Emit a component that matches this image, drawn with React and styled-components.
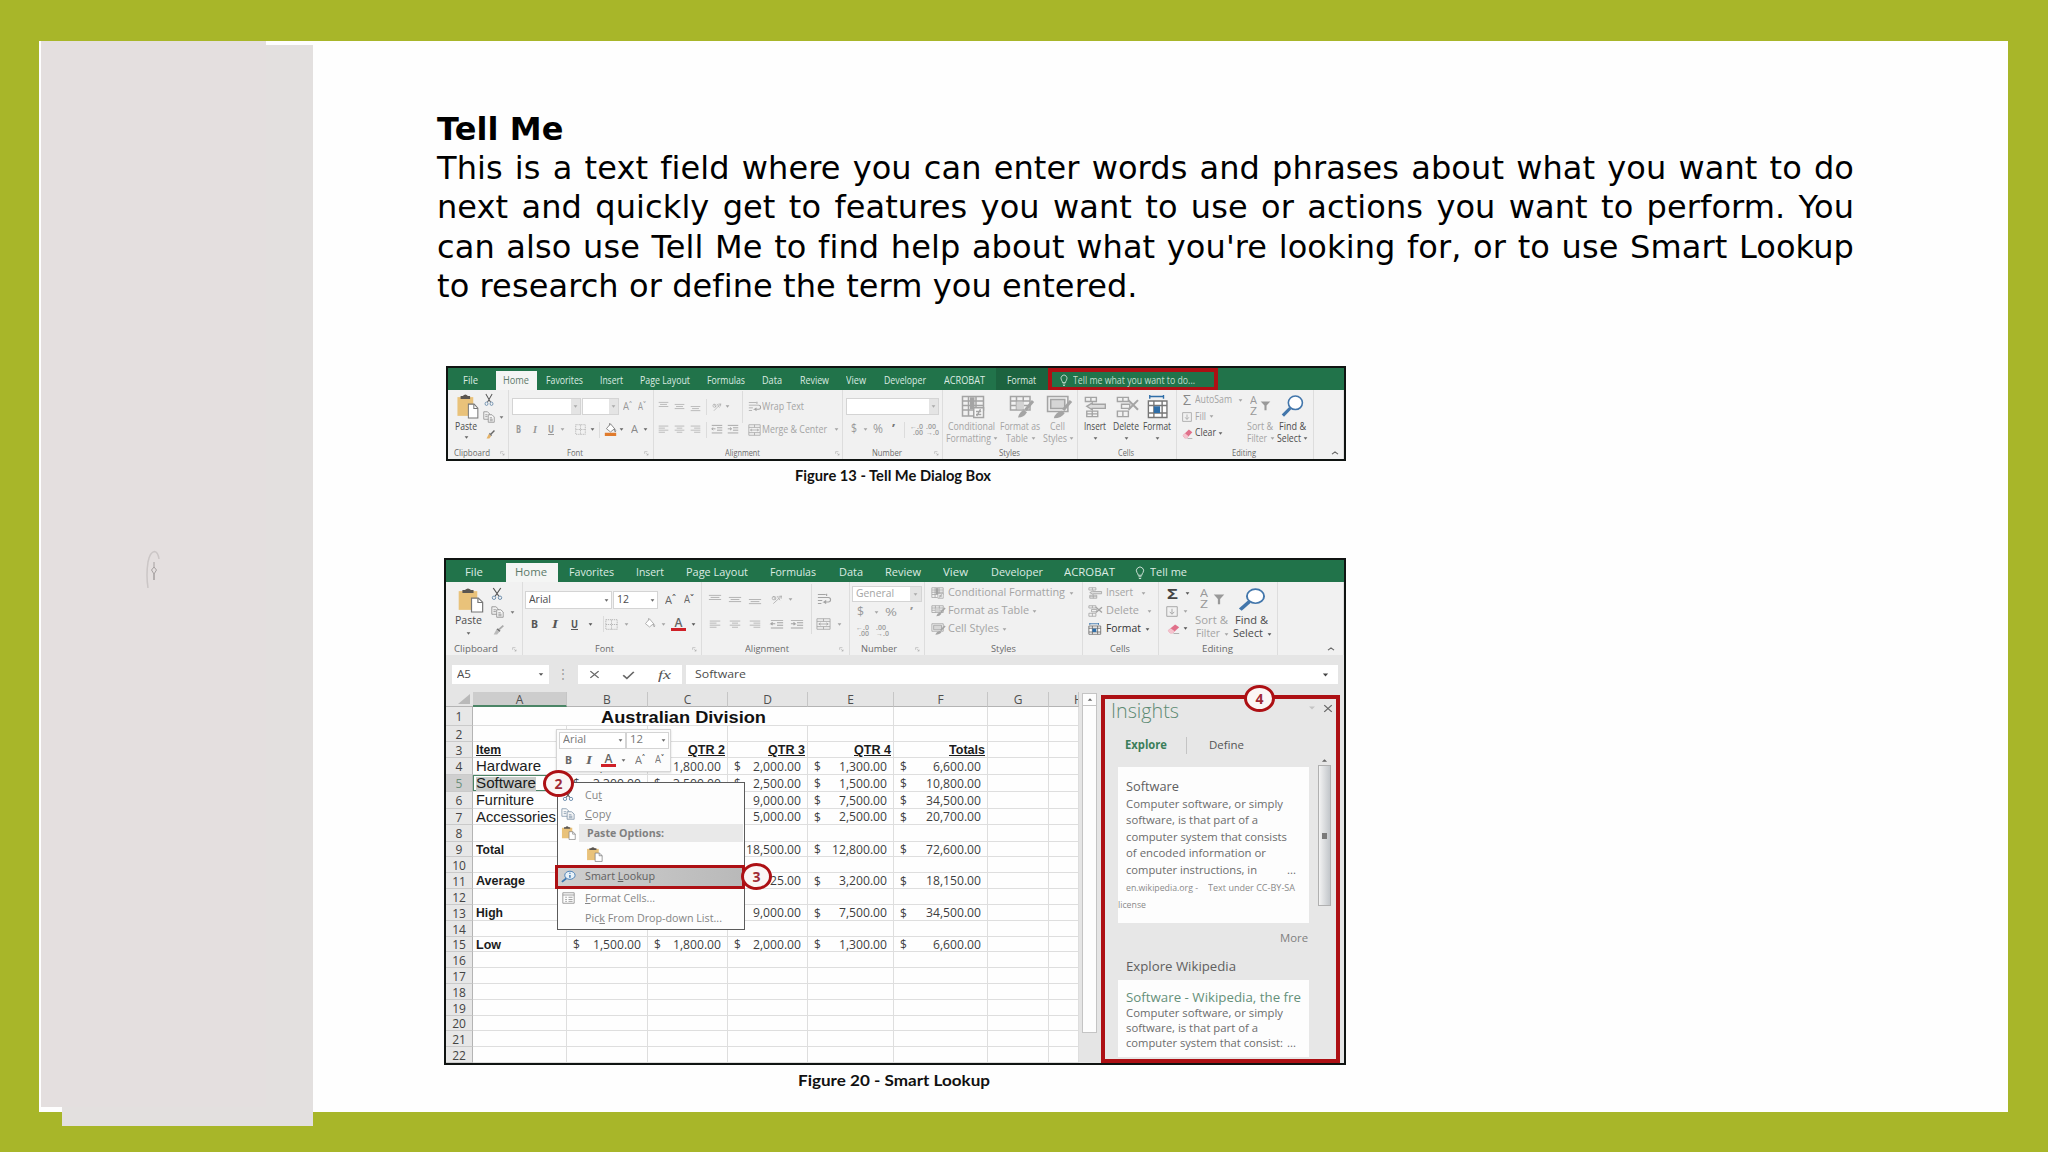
import * as React from "react";
import styled, { createGlobalStyle } from "styled-components";

const GREEN = "#21734a";
const RED = "#ad1014";
const OFF = "#a4a4a4";
const ON = "#4c4c4c";

const GlobalStyle = createGlobalStyle`
	* { box-sizing: border-box; }

	body {
		margin: 0;
		background: #a8b629;
		font-family: "Open Sans", "Noto Sans", sans-serif;
	}
`;

/* ---------- slide ---------- */

const SlideStyle = styled.div`
	width: 2048px;
	height: 1152px;
	padding: 41px 40px 40px 39px;
	background: #a8b629;
	overflow: hidden;
`;

const SheetStyle = styled.div`
	position: relative;
	display: flex;
	height: 1071px;
	background: #fefefe;
`;

const RailStyle = styled.div`
	flex: none;
	display: grid;
	width: 274px;
	height: 1085px;
`;

const RailPanelStyle = styled.div`
	grid-area: 1 / 1;
	margin: ${({ $margin }) => $margin};
	background: ${({ $color }) => $color};
`;

const RailMarkStyle = styled.svg`
	grid-area: 1 / 1;
	width: 20px;
	height: 44px;
	margin: 508px 0 0 103px;
`;

const ArticleStyle = styled.main`
	display: grid;
	grid-template-rows: 325px 192px 1fr;
	margin-left: 124px;
`;

const CopyStyle = styled.section`
	width: 1417px;
	padding-top: 69px;
	font-family: "DejaVu Sans", sans-serif;
	font-size: 32px;
	letter-spacing: 0.09px;
	line-height: 39.2px;
	font-variant-ligatures: common-ligatures;
	color: #000;
`;

const HeadingStyle = styled.h1`
	margin: 0;
	font-size: inherit;
	line-height: inherit;
`;

const LineStyle = styled.div`
	white-space: nowrap;
	text-align-last: ${({ $last }) => ($last ? "left" : "justify")};
`;

const FigureStyle = styled.figure`
	width: ${({ $w }) => $w}px;
	margin: 0 0 0 ${({ $left }) => $left}px;
`;

const FrameStyle = styled.div`
	position: relative;
	height: ${({ $h }) => $h}px;
	border: 2px solid #101412;
	background: #f1f1f1;
`;

const CaptionStyle = styled.figcaption`
	display: flex;
	height: ${({ $h }) => $h}px;
	padding-left: ${({ $left }) => $left}px;
	align-items: center;
	font-family: Lato, sans-serif;
`;

/* ---------- text squeezed to a width ---------- */

const FitBoxStyle = styled.span`
	display: block;
	flex: none;
	width: ${({ $w }) => $w}px;
	font-size: ${({ $size }) => $size}px;
	font-weight: ${({ $weight }) => $weight};
	font-family: ${({ $font }) => $font || "inherit"};
	font-style: ${({ $italic }) => ($italic ? "italic" : "normal")};
	text-decoration: ${({ $line }) => ($line ? "underline" : "none")};
	line-height: 1.36;
	white-space: nowrap;
	color: ${({ $color }) => $color};
`;

const FitTextStyle = styled.span`
	display: inline-block;
	transform-origin: 0 50%;
	text-decoration: inherit;
`;

const Fit = ({ w, size = 10, color = ON, weight = 400, font, italic, line, children }) => {
	const ref = React.useRef(null);
	const [scale, setScale] = React.useState(1);

	React.useLayoutEffect(() => {
		setScale(w / parseFloat(getComputedStyle(ref.current).width));
	}, [w, children]);

	return (
		<FitBoxStyle $w={w} $size={size} $color={color} $weight={weight} $font={font} $italic={italic} $line={line}>
			<FitTextStyle ref={ref} style={{ transform: `scaleX(${scale})` }}>
				{children}
			</FitTextStyle>
		</FitBoxStyle>
	);
};

/* ---------- icons, all on a 16 x 16 board ---------- */

const lines = (list) =>
	list.map(([y, x1, x2]) => <path key={y} d={`M${x1} ${y}H${x2}`} />);

const ICONS = {
	arrow: <path d="M2 4h12l-6 8z" fill="currentColor" stroke="none" />,
	paste: (
		<>
			<path d="M1 2h11v12H1z" fill="#e9c27a" stroke="none" />
			<path d="M3.2 3.2V1.3h1.5q1.8-2 3.6 0h1.5v1.9z" fill="#5b5650" stroke="none" />
			<path d="M8.6 6.5h4l2.6 2.6v6.3H8.6z" fill="#fff" stroke="#777" strokeWidth=".7" />
			<path d="M12.4 6.5v2.8h2.8" stroke="#777" strokeWidth=".7" />
		</>
	),
	cut: (
		<>
			<path d="M3 0l7.5 11M13 0L5.500 11" stroke="#555" strokeWidth="1.6" />
			<circle cx="4" cy="13" r="2.300" stroke="#6d8fae" strokeWidth="1.3" />
			<circle cx="12" cy="13" r="2.300" stroke="#6d8fae" strokeWidth="1.3" />
		</>
	),
	copy: (
		<>
			<path d="M1 1h5l3 3v7H1zM3 5h3M3 7.500h3" />
			<path d="M7 5h5l3 3v7H7z" fill="#f6f6f6" />
			<path d="M9 9h3M9 11h4M9 13h4" />
		</>
	),
	brush: (
		<>
			<path d="M15 1l-6 6" stroke="currentColor" strokeWidth="2.500" />
			<path d="M7 5l4 4-2 2-4-4z" fill="#777" stroke="none" />
			<path d="M5 7l4 4-3 4H1z" fill="var(--tip, #e5b266)" stroke="none" />
		</>
	),
	borders: <path d="M1 1h14v14H1zM1 8h14M8 1v14" strokeDasharray="1.500 1" />,
	fill: (
		<>
			<path d="M3 7l5-6 5 6-5 4z" fill="#fff" stroke="currentColor" />
			<path d="M13 7q2.500 3 1 4-2-.5-1-4M7 3V0" stroke="currentColor" />
			<path d="M1 12h14v4H1z" fill="var(--ink, none)" stroke="none" />
		</>
	),
	top: lines([[2, 1, 15], [5, 3, 13], [8, 1, 15]]),
	middle: lines([[5, 1, 15], [8, 3, 13], [11, 1, 15]]),
	bottom: lines([[8, 1, 15], [11, 3, 13], [14, 1, 15]]),
	left: lines([[3, 1, 15], [6, 1, 10], [9, 1, 15], [12, 1, 10]]),
	center: lines([[3, 1, 15], [6, 4, 12], [9, 1, 15], [12, 4, 12]]),
	right: lines([[3, 1, 15], [6, 6, 15], [9, 1, 15], [12, 6, 15]]),
	orient: (
		<>
			<path d="M3 14L14 3M14 3l-4 .5M14 3l-.5 4" />
			<circle cx="4" cy="6" r="2.500" />
			<path d="M6 8L3 3M8 3l4 6" />
		</>
	),
	outdent: <path d="M1 2h14M8 5.500h7M8 9h7M1 13h14M6 7H1l2-2M1 7l2 2" strokeWidth="1.300" />,
	indent: <path d="M1 2h14M8 5.500h7M8 9h7M1 13h14M1 7h5L4 5M6 7L4 9" strokeWidth="1.300" />,
	wrap: <path d="M1 2h9M1 6h12q2.500 0 2.500 3T13 12H8l2.500-2M8 12l2.500 2M1 10h5M1 14h4M11 1v3" strokeWidth="1.300" />,
	merge: <path d="M1 1h14v14H1zM1 4.500h14M1 11.500h14M8 1v3.500M8 11.500V15M3 8h10M5 6.500L3 8l2 1.500M11 6.500L13 8l-2 1.500" />,
	cond: (
		<>
			<path d="M1 1h14v9H1zM1 4h14M1 7h14M5 1v13M10 1v9M1 10v4h7" />
			<path d="M6 1.500h3v8H6z" fill="currentColor" stroke="none" />
			<path d="M8.500 8.500H15V15H8.500z" fill="#f8f8f8" />
			<path d="M10 11h3.500M10 13h3.500M13 9.500l-2.500 4.500" />
		</>
	),
	table: (
		<>
			<path d="M1 1h13v9H1zM1 4h13M1 7h13M5 1v9M9.500 1v9" />
			<path d="M5 4.500h5v5H5z" fill="#d2d2d2" stroke="none" />
			<path d="M16 4l-5 6" strokeWidth="2" />
			<path d="M6 15q1-4 4-5l2 1.500q-2 3.500-6 3.500z" fill="currentColor" stroke="none" />
		</>
	),
	cellStyle: (
		<>
			<path d="M1 1h13v10H1z" />
			<path d="M3 3h9v6H3z" fill="#d6d6d6" />
			<path d="M16 4l-5 6" strokeWidth="2" />
			<path d="M5 15.500q1-4 5-5l2 1.500q-2 3.500-7 3.500z" fill="currentColor" stroke="none" />
		</>
	),
	insert: (
		<>
			<path d="M1 1h8v3H1zM5 1v3M2 11h8v4H2zM6 11v4M2 13h8" />
			<path d="M6 6h9.500v3H6L6 10 2 7.500 6 5z" fill="#ddd" />
		</>
	),
	remove: (
		<>
			<path d="M1 1h8v3H1zM5 1v3M1 11h8v4H1zM5 11v4M4 6h6v3H4z" />
			<path d="M9 3l7 7M16 3l-7 7" strokeWidth="1.500" />
		</>
	),
	format: (
		<>
			<path d="M1 4h13.500v11H1zM1 7h13.500M1 12h13.500M5 4v11M11 4v11" fill="#fff" />
			<path d="M5 7.500h4.500V12H5z" fill="var(--blue, #2f6ea8)" stroke="none" />
			<path d="M2 1h10M2 0v2.500M12 0v2.500" stroke="var(--blue, #2f6ea8)" />
		</>
	),
	down: <path d="M1 1h14v14H1zM8 4v7M5 8.500L8 12l3-3.500" strokeWidth="1.300" />,
	eraser: (
		<>
			<path d="M1 11L10 2l5 4-8 9H4z" fill="#e0708a" stroke="none" />
			<path d="M1 11l3.500-3.500L9.500 12 7 15H4z" fill="#f4c3cd" stroke="none" />
			<path d="M8 15.300h7" stroke="#999" />
		</>
	),
	funnel: <path d="M1 2h14L9.500 8v7h-3V8z" fill="currentColor" stroke="none" />,
	find: (
		<>
			<path d="M6.500 9.500L1.300 15" stroke="#4276ab" strokeWidth="2.200" />
			<circle cx="10" cy="5.700" r="4.900" fill="#fff" stroke="#4276ab" strokeWidth="1.100" />
		</>
	),
	launch: <path d="M2 9V2h9M7 7l6 6M13 8v5H8" strokeWidth="1.500" />,
	up: <path d="M2 11l6-6 6 6" strokeWidth="2.200" />,
	bulb: <path d="M5.500 11q0-2-1.500-3.500a4.800 4.800 0 1 1 8 0Q10.500 9 10.500 11zM6 13h4M6.500 15.300h3" strokeWidth="1.200" />,
	close: <path d="M2 2l12 12M14 2L2 14" strokeWidth="2" />,
	check: <path d="M1.500 8.500l4.500 5L14.500 3" strokeWidth="2.200" />,
	smart: (
		<>
			<path d="M6 10l-5 4.500" stroke="#3a76b0" strokeWidth="2" />
			<ellipse cx="9.500" cy="6.500" rx="5.500" ry="5" fill="#e8f1f8" stroke="#3a76b0" />
			<path d="M9.500 6v3.500M9.500 3.500v1" stroke="#3a76b0" strokeWidth="1.500" />
		</>
	),
	list: <path d="M1 1h14v14H1zM1 4h14M4 7h2M8 7h5M4 10h2M8 10h5M4 12.500h2M8 12.500h5" />,
};

const IconStyle = styled.svg`
	display: block;
	flex: none;
	width: ${({ $w }) => $w}px;
	height: ${({ $h }) => $h}px;
	color: ${({ $color }) => $color};
	fill: none;
	stroke: currentColor;
	overflow: visible;
	--tip: ${({ $tip }) => $tip || "#e5b266"};
	--ink: ${({ $ink }) => $ink || "none"};
	--blue: ${({ $tip }) => $tip || "#2f6ea8"};
`;

const Icon = ({ name, w, h, color = OFF, tip, ink }) => (
	<IconStyle viewBox="0 0 16 16" preserveAspectRatio="none" $w={w} $h={h || w} $color={color} $tip={tip} $ink={ink}>
		{ICONS[name]}
	</IconStyle>
);

/* ---------- rows measured on the ruler of the page ---------- */

const StripStyle = styled.div`
	display: flex;
	flex: none;
	align-items: center;
	height: ${({ $h }) => $h}px;
	margin-top: ${({ $gap }) => $gap}px;
`;

const SlotStyle = styled.div`
	display: flex;
	flex: none;
	align-self: stretch;
	align-items: center;
	width: ${({ $w }) => $w}px;
	margin-left: ${({ $gap }) => $gap}px;
`;

const Strip = ({ from, h = 12, gap = 0, items }) => {
	let edge = from;

	return (
		<StripStyle $h={h} $gap={gap}>
			{items.map(([x, w, content, text], idx) => {
				const space = x - edge;
				edge = x + w;
				return (
					<SlotStyle key={idx} $gap={space} $w={w}>
						{typeof content === "string" ? (
							<Fit w={w} {...text}>{content}</Fit>
						) : (
							content
						)}
					</SlotStyle>
				);
			})}
		</StripStyle>
	);
};

const StackStyle = styled.div`
	display: flex;
	flex-direction: column;
	align-self: flex-start;
	width: 100%;
`;

const Stack = ({ from, top, rows }) => {
	let edge = top;

	return (
		<StackStyle>
			{rows.map(([center, items, h = 12], idx) => {
				const gap = center - h / 2 - edge;
				edge = center + h / 2;
				return <Strip key={idx} from={from} h={h} gap={gap} items={items} />;
			})}
		</StackStyle>
	);
};

const ic = (x, w, name, h, props) => [x, w, <Icon name={name} w={w} h={h} {...props} />];
const dd = (x, color = OFF) => [x - 2.5, 5, <Icon name="arrow" w={5} h={5} color={color} />];

const RuleStyle = styled.span`
	width: 1px;
	height: ${({ $h }) => $h}px;
	background: #dcdcdc;
`;

const rule = (x, h = 16) => [x, 1, <RuleStyle $h={h} />];

const DecimalStyle = styled.div`
	display: flex;
	flex-direction: column;
	align-items: ${({ $end }) => ($end ? "flex-end" : "flex-start")};
	font-size: 7px;
	font-weight: 600;
	line-height: 6px;
	color: #9c9c9c;
`;

const more = (x, w) => [x, w, <DecimalStyle $end><span>←.0</span><span>.00</span></DecimalStyle>];
const fewer = (x, w) => [x, w, <DecimalStyle><span>.00</span><span>→.0</span></DecimalStyle>];

const ComboStyle = styled.div`
	display: flex;
	width: 100%;
	height: ${({ $h }) => $h}px;
	align-items: center;
	justify-content: space-between;
	padding-left: 3px;
	border: 1px solid #d4d4d4;
	background: #fff;
`;

const ComboButtonStyle = styled.span`
	display: flex;
	width: ${({ $w }) => $w}px;
	height: 100%;
	margin-left: auto;
	align-items: center;
	justify-content: center;
	background: ${({ $off }) => ($off ? "#e4e4e4" : "transparent")};
`;

const Combo = ({ h, text, w, size, off, color, button = 9 }) => (
	<ComboStyle $h={h}>
		{text && <Fit w={w} size={size} color={color}>{text}</Fit>}
		<ComboButtonStyle $w={button} $off={off}>
			<Icon name="arrow" w={5} h={5} color={off ? "#aaa" : "#666"} />
		</ComboButtonStyle>
	</ComboStyle>
);

/* ---------- ribbon ---------- */

const TabBarStyle = styled.nav`
	display: flex;
	height: 22px;
	align-items: flex-end;
	background: ${GREEN};
`;

const TabStyle = styled.div`
	display: flex;
	flex: none;
	width: ${({ $w }) => $w}px;
	height: ${({ $active }) => ($active ? 19 : 22)}px;
	align-items: center;
	padding-left: ${({ $pad }) => $pad}px;
	padding-top: ${({ $active, $drop }) => ($active ? 0 : 3) + $drop}px;
	background: ${({ $active, $dark }) => ($active ? "#f4f5f4" : $dark ? "#1c633f" : "none")};
`;

const TellMeStyle = styled.div`
	display: flex;
	flex: none;
	width: ${({ $w }) => $w}px;
	height: 22px;
	align-items: center;
	gap: 4px;
	padding: ${({ $boxed }) => ($boxed ? "2px 0 0 7px" : "3px 0 0")};
	margin-left: ${({ $gap }) => $gap}px;
	border: ${({ $boxed }) => ($boxed ? `4px solid ${RED}` : "none")};
	border-bottom-width: ${({ $boxed }) => ($boxed ? 3 : 0)}px;
`;

const RibbonBodyStyle = styled.div`
	display: flex;
	height: ${({ $h }) => $h}px;
	background: #f1f1f1;
`;

const GroupStyle = styled.section`
	display: flex;
	flex: none;
	flex-direction: column;
	width: ${({ $w }) => $w}px;
	border-right: 1px solid #dddddd;
`;

const GroupBodyStyle = styled.div`
	height: ${({ $h }) => $h}px;
`;

const Tabs = ({ tabs, size, drop = 0, children }) => (
	<TabBarStyle>
		{tabs.map(({ name, x, w, from, to, active, dark }) => (
			<TabStyle key={name} $w={to - from} $pad={x - from} $active={active} $dark={dark} $drop={drop}>
				<Fit w={w} size={size} color={active ? "#5d7a6a" : "#dcebe2"}>
					{name}
				</Fit>
			</TabStyle>
		))}
		{children}
	</TabBarStyle>
);

const Ribbon = ({ top, h, groups }) => (
	<RibbonBodyStyle $h={h}>
		{groups.map(({ from, to, label, launch, up, rows }) => (
			<GroupStyle key={from} $w={to - from}>
				<GroupBodyStyle $h={h - 12}>
					<Stack from={from} top={top} rows={rows} />
				</GroupBodyStyle>
				<Strip
					from={from}
					h={12}
					items={[
						...(label ? [[label[0], label[1], label[2], { size: 9, color: "#6a6a6a" }]] : []),
						...(launch ? [ic(launch - 2.5, 5, "launch", 5, { color: "#999" })] : []),
						...(up ? [ic(up - 4, 8, "up", 6, { color: "#666" })] : []),
					]}
				/>
			</GroupStyle>
		))}
	</RibbonBodyStyle>
);

const tab = (name, x, w, from, to, extra) => ({ name, x, w, from, to, ...extra });

const RIBBON_TABS = [
	tab("File", 463, 15, 448, 496),
	tab("Home", 503, 26, 496, 537, { active: true }),
	tab("Favorites", 546, 37, 537, 592),
	tab("Insert", 600, 23, 592, 632),
	tab("Page Layout", 640, 50, 632, 698),
	tab("Formulas", 707, 38, 698, 754),
	tab("Data", 762, 20, 754, 791),
	tab("Review", 800, 29, 791, 838),
	tab("View", 846, 20, 838, 875),
	tab("Developer", 884, 42, 875, 935),
	tab("ACROBAT", 944, 41, 935, 996),
	tab("Format", 1007, 29, 996, 1048, { dark: true }),
];

const off = { size: 10, color: OFF };
const on = { size: 10, color: ON };
const letter = (color, extra) => ({ size: 11, color, weight: 700, ...extra });

const RIBBON_GROUPS = [
	{
		from: 448, to: 509, label: [454, 36, "Clipboard"], launch: 502,
		rows: [[418, [
			[448, 32, <Stack from={448} top={390} rows={[
				[405.5, [ic(456, 23, "paste", 25)], 26],
				[425.5, [[455, 22, "Paste", on]]],
				[436, [dd(466, "#666")], 4],
			]} />],
			[480, 28, <Stack from={480} top={390} rows={[
				[399, [ic(484, 10, "cut", 12)]],
				[416, [ic(483, 12, "copy", 12, { color: "#888" }), dd(501, "#777")]],
				[433, [ic(486, 9, "brush", 9, { color: "#666" })]],
			]} />],
		], 56]],
	},
	{
		from: 509, to: 654, label: [567, 16, "Font"], launch: 646,
		rows: [
			[405.5, [
				[512, 69, <Combo h={17} off />],
				[582, 37, <Combo h={17} off />],
				[623, 6, "A", letter("#999", { weight: 400 })], [629, 3, "ˆ", off],
				[638, 5, "A", letter("#999", { weight: 400, size: 10 })], [643, 3, "ˇ", off],
			], 18],
			[428.5, [
				[516, 5, "B", letter("#999")],
				[533, 4, "I", letter("#999", { italic: true, font: "Liberation Serif" })],
				[548, 6, "U", letter("#999", { line: true })], dd(562),
				ic(575, 11, "borders", 11), dd(592, "#666"), rule(599),
				ic(604, 13, "fill", 13, { color: "#777", ink: "#e07b2c" }), dd(621, "#666"),
				[631, 7, "A", letter("#888", { weight: 400 })], dd(645, "#666"),
			], 14],
		],
	},
	{
		from: 654, to: 843, label: [725, 35, "Alignment"], launch: 837,
		rows: [
			[405.5, [
				ic(658, 11, "top", 11), ic(674, 11, "middle", 11), ic(690, 11, "bottom", 11), rule(706),
				ic(712, 10, "orient", 10), dd(727), rule(742, 32),
				ic(748, 13, "wrap", 11), [762, 42, "Wrap Text", off],
			], 14],
			[428.5, [
				ic(658, 11, "left", 11), ic(674, 11, "center", 11), ic(690, 11, "right", 11), rule(706),
				ic(711, 12, "outdent", 11), ic(727, 12, "indent", 11),
				ic(748, 13, "merge", 12), [762, 65, "Merge & Center", off], dd(836),
			], 14],
		],
	},
	{
		from: 843, to: 943, label: [872, 30, "Number"], launch: 936,
		rows: [
			[405.5, [[846, 93, <Combo h={17} off />]], 18],
			[428.5, [
				[851, 6, "$", { size: 12, color: "#999" }], dd(865),
				[873, 10, "%", { size: 12, color: "#999" }], [892, 3, "’", { size: 12, color: "#777", weight: 700 }], rule(904),
				more(910, 11), fewer(926, 11),
			], 14],
		],
	},
	{
		from: 943, to: 1078, label: [999, 21, "Styles"],
		rows: [
			[405.5, [ic(961, 24, "cond", 24), ic(1009, 24, "table", 24), ic(1046, 25, "cellStyle", 24)], 24],
			[425.5, [[948, 47, "Conditional", off], [1000, 40, "Format as", off], [1050, 15, "Cell", off]]],
			[437.5, [[946, 45, "Formatting", off], dd(995), [1006, 22, "Table", off], dd(1033), [1043, 24, "Styles", off], dd(1071)]],
		],
	},
	{
		from: 1078, to: 1177, label: [1118, 16, "Cells"],
		rows: [
			[405.5, [ic(1084, 22, "insert", 22), ic(1116, 22, "remove", 22), ic(1147, 22, "format", 24, { color: "#777" })], 24],
			[425.5, [[1084, 22, "Insert", on], [1113, 26, "Delete", on], [1143, 28, "Format", on]]],
			[437, [dd(1095, "#666"), dd(1126, "#666"), dd(1157, "#666")], 4],
		],
	},
	{
		from: 1177, to: 1314, label: [1232, 24, "Editing"],
		rows: [[418, [
			[1177, 67, <Stack from={1177} top={390} rows={[
				[399, [[1183, 8, "Σ", { size: 14, color: "#888" }], [1195, 37, "AutoSam", off], dd(1240)]],
				[415.5, [ic(1182, 10, "down", 10), [1195, 11, "Fill", off], dd(1211)]],
				[432, [ic(1182, 11, "eraser", 11), [1195, 21, "Clear", on], dd(1220, "#666")]],
			]} />],
			[1244, 66, <Stack from={1244} top={390} rows={[
				[404.5, [
					[1250, 8, <Stack from={1250} top={393.5} rows={[
						[399, [[1250, 7, "A", { size: 11, color: "#999" }]], 10],
						[410, [[1250, 7, "Z", { size: 11, color: "#999" }]], 10],
					]} />],
					ic(1260, 11, "funnel", 11, { color: "#999" }),
					ic(1281, 23, "find", 22),
				], 22],
				[425.5, [[1247, 26, "Sort &", off], [1279, 27, "Find &", on]]],
				[437.5, [[1247, 20, "Filter", off], dd(1272), [1277, 24, "Select", on], dd(1305, "#666")]],
			]} />],
		], 56]],
	},
	{ from: 1314, to: 1344, up: 1335, rows: [] },
];

const SHEET_TABS = [
	tab("File", 465, 18, 446, 506),
	tab("Home", 515, 32, 506, 558, { active: true }),
	tab("Favorites", 569, 45, 558, 625),
	tab("Insert", 636, 28, 625, 675),
	tab("Page Layout", 686, 62, 675, 759),
	tab("Formulas", 770, 46, 759, 828),
	tab("Data", 839, 24, 828, 874),
	tab("Review", 885, 36, 874, 932),
	tab("View", 943, 25, 932, 980),
	tab("Developer", 991, 52, 980, 1053),
	tab("ACROBAT", 1064, 51, 1053, 1126),
];

const SHEET_GROUPS = [
	{
		from: 446, to: 523, label: [454, 44, "Clipboard"], launch: 514,
		rows: [[611, [
			[446, 40, <Stack from={446} top={582} rows={[
				[600, [ic(457, 27, "paste", 25)], 26],
				[621, [[455, 27, "Paste", on]]],
				[633, [dd(468, "#666")], 4],
			]} />],
			[486, 34, <Stack from={486} top={582} rows={[
				[594, [ic(491, 12, "cut", 12)]],
				[612, [ic(491, 13, "copy", 12, { color: "#888" }), dd(512, "#777")]],
				[630, [ic(493, 11, "brush", 10, { color: "#aaa", tip: "#bbb" })]],
			]} />],
		], 58]],
	},
	{
		from: 523, to: 702, label: [595, 19, "Font"], launch: 694,
		rows: [
			[600, [
				[525, 87, <Combo h={18} text="Arial" w={22} />],
				[613, 45, <Combo h={18} text="12" w={12} />],
				[665, 7, "A", letter("#666", { weight: 400 })], [672, 4, "ˆ", on],
				[684, 6, "A", letter("#666", { weight: 400, size: 10 })], [690, 4, "ˇ", on],
			], 18],
			[624, [
				[531, 7, "B", letter("#555")],
				[552, 6, "I", letter("#555", { italic: true, font: "Liberation Serif", size: 13 })],
				[571, 7, "U", letter("#555", { line: true })], dd(590, "#555"), rule(603),
				ic(605, 13, "borders", 11), dd(626),
				ic(643, 13, "fill", 13), dd(663),
				[671, 15, <RedLetter w={15} />], dd(693, "#555"),
			], 14],
		],
	},
	{
		from: 702, to: 850, label: [745, 44, "Alignment"], launch: 841,
		rows: [
			[599, [
				ic(708, 14, "top", 11), ic(728, 14, "middle", 11), ic(748, 14, "bottom", 11),
				ic(771, 12, "orient", 11), dd(790), rule(811, 30), ic(817, 14, "wrap", 12),
			], 14],
			[624, [
				ic(709, 12, "left", 11), ic(729, 12, "center", 11), ic(749, 12, "right", 11),
				ic(770, 14, "outdent", 11), ic(790, 14, "indent", 11), rule(811, 20),
				ic(816, 15, "merge", 12), dd(839),
			], 14],
		],
	},
	{
		from: 850, to: 925, label: [861, 36, "Number"], launch: 917,
		rows: [
			[594, [[852, 70, <Combo h={16} text="General" w={38} color={OFF} off button={11} />]], 16],
			[612, [
				[857, 7, "$", { size: 12, color: "#999" }], dd(876),
				[885, 12, "%", { size: 11, color: "#999" }], [910, 3, "’", { size: 12, color: "#999", weight: 700 }],
			]],
			[631, [more(856, 12), fewer(876, 12)]],
		],
	},
	{
		from: 925, to: 1083, label: [991, 25, "Styles"],
		rows: [
			[593, [ic(931, 13, "cond", 12), [948, 117, "Conditional Formatting", off], dd(1071)]],
			[611, [ic(931, 14, "table", 12), [948, 81, "Format as Table", off], dd(1034)]],
			[629, [ic(931, 14, "cellStyle", 12), [948, 51, "Cell Styles", off], dd(1004)]],
		],
	},
	{
		from: 1083, to: 1159, label: [1110, 20, "Cells"],
		rows: [
			[593, [ic(1088, 14, "insert", 12), [1106, 27, "Insert", off], dd(1143)]],
			[611, [ic(1088, 14, "remove", 12), [1106, 33, "Delete", off], dd(1149)]],
			[629, [ic(1088, 14, "format", 12, { color: "#666" }), [1106, 35, "Format", { size: 10, color: "#333" }], dd(1147, "#555")]],
		],
	},
	{
		from: 1159, to: 1278, label: [1202, 31, "Editing"],
		rows: [[611, [
			[1159, 33, <Stack from={1159} top={582} rows={[
				[593, [[1167, 11, "Σ", { size: 15, color: "#444", weight: 700 }], dd(1187, "#555")]],
				[611, [ic(1166, 12, "down", 11), dd(1185)]],
				[628.5, [ic(1167, 13, "eraser", 11), dd(1185, "#555")]],
			]} />],
			[1192, 84, <Stack from={1192} top={582} rows={[
				[599, [
					[1200, 9, <Stack from={1200} top={587} rows={[
						[593, [[1200, 8, "A", { size: 11, color: "#999" }]], 10],
						[604.5, [[1200, 8, "Z", { size: 11, color: "#999" }]], 10],
					]} />],
					ic(1213, 12, "funnel", 12, { color: "#999" }),
					ic(1238, 28, "find", 23),
				], 24],
				[621, [[1195, 33, "Sort &", off], [1235, 33, "Find &", on]]],
				[634, [[1196, 24, "Filter", off], dd(1226), [1233, 30, "Select", on], dd(1269, "#555")]],
			]} />],
		], 58]],
	},
	{ from: 1278, to: 1344, up: 1331, rows: [] },
];

const RedLetterStyle = styled.span`
	display: flex;
	justify-content: center;
	width: ${({ $w }) => $w}px;
	height: 14px;
	border-bottom: 3px solid #cf2027;
	font-size: 12px;
	font-weight: 600;
	line-height: 12px;
	color: #666;
`;

function RedLetter({ w }) {
	return <RedLetterStyle $w={w}>A</RedLetterStyle>;
}

/* ---------- formula bar ---------- */

const FormulaBarStyle = styled.div`
	display: flex;
	height: 37px;
	padding: 10px 6px 0;
	background: #e5e5e5;
`;

const FormulaBoxStyle = styled.div`
	display: flex;
	width: ${({ $w }) => $w}px;
	height: 19px;
	margin-right: ${({ $gap }) => $gap || 0}px;
	padding: 0 ${({ $pad }) => $pad}px;
	align-items: center;
	justify-content: space-between;
	background: #fff;
`;

const DotsStyle = styled.span`
	width: 29px;
	height: 19px;
	padding-left: 8px;
	font-size: 12px;
	line-height: 17px;
	color: #999;
`;

const FormulaBar = () => (
	<FormulaBarStyle>
		<FormulaBoxStyle $w={97} $pad={5}>
			<Fit w={14} size={10}>A5</Fit>
			<Icon name="arrow" w={6} h={5} color="#555" />
		</FormulaBoxStyle>
		<DotsStyle>⋮</DotsStyle>
		<FormulaBoxStyle $w={104} $pad={11} $gap={4}>
			<Icon name="close" w={11} h={9} color="#666" />
			<Icon name="check" w={13} h={10} color="#666" />
			<Fit w={13} size={13} italic font="Liberation Serif" color="#555">fx</Fit>
		</FormulaBoxStyle>
		<FormulaBoxStyle $w={653} $pad={9}>
			<Fit w={51} size={11}>Software</Fit>
			<Icon name="arrow" w={7} h={6} color="#444" />
		</FormulaBoxStyle>
	</FormulaBarStyle>
);

/* ---------- grid ---------- */

const COLUMNS = [["A", 94], ["B", 81], ["C", 80], ["D", 80], ["E", 86], ["F", 94], ["G", 61], ["H", 30]];

const ROW_HEIGHTS = [19, 16, 16, 17, 17, 17, 16, 17, 15, 16, 16, 16, 16, 16, 15, 16, 16, 16, 16, 15, 16, 16];

const ROWS = {
	3: ["Item", "QTR 1", "QTR 2", "QTR 3", "QTR 4", "Totals"],
	4: ["Hardware", "1,500.00", "1,800.00", "2,000.00", "1,300.00", "6,600.00"],
	5: ["Software", "3,300.00", "3,500.00", "2,500.00", "1,500.00", "10,800.00"],
	6: ["Furniture", "9,000.00", "9,000.00", "9,000.00", "7,500.00", "34,500.00"],
	7: ["Accessories", "6,700.00", "6,500.00", "5,000.00", "2,500.00", "20,700.00"],
	9: ["Total", "20,500.00", "20,800.00", "18,500.00", "12,800.00", "72,600.00"],
	11: ["Average", "5,125.00", "5,200.00", "4,625.00", "3,200.00", "18,150.00"],
	13: ["High", "9,000.00", "9,000.00", "9,000.00", "7,500.00", "34,500.00"],
	15: ["Low", "1,500.00", "1,800.00", "2,000.00", "1,300.00", "6,600.00"],
};

const LABEL_WIDTHS = {
	Item: 25, Hardware: 65, Software: 60, Furniture: 58, Accessories: 80,
	Total: 28, Average: 49, High: 27, Low: 25,
	"QTR 1": 37, "QTR 2": 37, "QTR 3": 37, "QTR 4": 37, Totals: 36,
};

const WorkAreaStyle = styled.div`
	display: flex;
	height: 371px;
	background: #e5e5e5;
`;

const GridStyle = styled.div`
	width: 633px;
	flex: none;
`;

const GridRowStyle = styled.div`
	display: flex;
	height: ${({ $h }) => $h}px;
`;

const CornerStyle = styled.div`
	width: 27px;
	padding: 2px 3px 2px 12px;
	background: #e5e5e5;
	border-bottom: 1px solid #b4b4b4;
`;

const ColumnHeadStyle = styled.div`
	display: flex;
	flex: none;
	width: ${({ $w }) => $w}px;
	justify-content: ${({ $clip }) => ($clip ? "flex-end" : "center")};
	align-items: center;
	padding-top: ${({ $active }) => ($active ? 2 : 1)}px;
	font-size: 12px;
	line-height: 14px;
	color: #4f4f4f;
	background: ${({ $active }) => ($active ? "#cdcdcd" : "#e5e5e5")};
	border-right: 1px solid #c6c6c6;
	border-bottom: ${({ $active }) => ($active ? "2px solid #4b8566" : "1px solid #b4b4b4")};
`;

const ClippedStyle = styled.span`
	width: 4px;
	overflow: hidden;
`;

const RowHeadStyle = styled.div`
	display: flex;
	flex: none;
	width: 27px;
	justify-content: center;
	align-items: center;
	padding-top: 2px;
	font-size: 12px;
	line-height: 14px;
	color: ${({ $active }) => ($active ? "#6c8f7c" : "#444")};
	background: ${({ $active }) => ($active ? "#cfcfcf" : "#e7e7e7")};
	border-right: 1px solid #b4b4b4;
	border-bottom: 1px solid #cacaca;
`;

const CellStyle = styled.div`
	display: flex;
	flex: none;
	width: ${({ $w }) => $w}px;
	align-items: center;
	justify-content: ${({ $align }) => $align || "space-between"};
	padding: 2px ${({ $pad }) => ($pad === undefined ? 6 : $pad)}px 0;
	font-size: 12px;
	line-height: 14px;
	color: #3e3e3e;
	background: #fefefe;
	border-right: 1px solid #dedede;
	border-bottom: 1px solid #dedede;
	box-shadow: ${({ $active }) => ($active ? "inset 0 0 0 1px #4b8566" : "none")};
`;

const PickedStyle = styled.span`
	display: flex;
	height: 14px;
	align-items: center;
	background: ${({ $active }) => ($active ? "#c8cbc9" : "none")};
`;

const ARIAL = "'Liberation Sans', Arial, sans-serif";

const LabelCell = ({ value, row, w }) => {
	const big = row >= 4 && row <= 7;

	return (
		<CellStyle $w={w} $align="flex-start" $pad={3} $active={row === 5}>
			{value && (
				<PickedStyle $active={row === 5}>
					<Fit w={LABEL_WIDTHS[value]} size={big ? 14.5 : 12.5} weight={big ? 400 : 700} color="#1c1c1c" font={ARIAL} line={row === 3}>
						{value}
					</Fit>
				</PickedStyle>
			)}
		</CellStyle>
	);
};

const NumberCell = ({ value, row, w }) => {
	if (row === 3 && value) {
		return (
			<CellStyle $w={w} $align="flex-end" $pad={2}>
				<Fit w={LABEL_WIDTHS[value]} size={12.5} weight={700} color="#1c1c1c" font={ARIAL} line>
					{value}
				</Fit>
			</CellStyle>
		);
	}

	return (
		<CellStyle $w={w}>
			{value && (
				<>
					<span>$</span>
					<Fit w={value.length === 9 ? 55 : 48} size={12} color="#3e3e3e">{value}</Fit>
				</>
			)}
		</CellStyle>
	);
};

const Grid = () => (
	<GridStyle>
		<GridRowStyle $h={15}>
			<CornerStyle>
				<Icon name="corner" w={12} h={10} />
			</CornerStyle>
			{COLUMNS.map(([name, w]) => (
				<ColumnHeadStyle key={name} $w={w} $active={name === "A"} $clip={name === "H"}>
					{name === "H" ? <ClippedStyle>H</ClippedStyle> : name}
				</ColumnHeadStyle>
			))}
		</GridRowStyle>
		{ROW_HEIGHTS.map((h, idx) => {
			const row = idx + 1;
			const values = ROWS[row] || [];

			return (
				<GridRowStyle key={row} $h={h}>
					<RowHeadStyle $active={row === 5}>{row}</RowHeadStyle>
					{row === 1 ? (
						<>
							<CellStyle $w={421} $align="center">
								<Fit w={165} size={16.5} weight={700} color="#111" font={ARIAL}>
									Australian Division
								</Fit>
							</CellStyle>
							{COLUMNS.slice(5).map(([name, w]) => <CellStyle key={name} $w={w} />)}
						</>
					) : (
						COLUMNS.map(([name, w], col) =>
							col === 0 ? (
								<LabelCell key={name} value={values[col]} row={row} w={w} />
							) : (
								<NumberCell key={name} value={values[col]} row={row} w={w} />
							)
						)
					)}
				</GridRowStyle>
			);
		})}
	</GridStyle>
);

ICONS.corner = <path d="M16 0v16H0z" fill="#b9b9b9" stroke="none" />;

const ScrollbarStyle = styled.div`
	flex: none;
	width: 15px;
	height: 340px;
	margin: 1px 0 0 3px;
	border: 1px solid #c4c4c4;
	background: #fdfdfd;
`;

const ScrollTopStyle = styled.div`
	display: flex;
	height: 12px;
	align-items: center;
	justify-content: center;
	border-bottom: 1px solid #c4c4c4;
`;

const FlipStyle = styled.span`
	transform: rotate(180deg);
`;

/* ---------- insights pane ---------- */

const PaneStyle = styled.aside`
	flex: none;
	width: 239px;
	height: 368px;
	margin: 3px 0 0 4px;
	border: 4px solid ${RED};
	background: #e7e7e7;
`;

const PaneBodyStyle = styled.div`
	display: flex;
	margin-top: 2px;
`;

const PaneMainStyle = styled.div`
	width: 204px;
	padding-left: 13px;
`;

const CardStyle = styled.div`
	height: ${({ $h }) => $h}px;
	background: #fdfdfd;
`;

const PaneScrollStyle = styled.div`
	width: 13px;
	margin-left: 9px;
`;

const ThumbStyle = styled.div`
	display: flex;
	height: 141px;
	align-items: center;
	justify-content: center;
	border: 1px solid #b0b0b0;
	background: linear-gradient(90deg, #f3f3f3, #c2c6ca);
`;

const GripStyle = styled.span`
	width: 5px;
	height: 6px;
	background: #7a7a7a;
`;

const DividerStyle = styled.span`
	width: 1px;
	height: 17px;
	background: #c4c4c4;
`;

const body = { size: 11.5, color: "#6c6c6c" };

const Insights = () => (
	<PaneStyle>
		<Stack from={1105} top={699} rows={[
			[711, [
				[1111, 68, "Insights", { size: 20, color: "#5d8a73", weight: 300 }],
				[1308, 8, <RaisedStyle><Icon name="arrow" w={8} h={6} color="#c4c4c4" /></RaisedStyle>],
				[1323, 10, <RaisedStyle><Icon name="close" w={10} h={9} color="#666" /></RaisedStyle>],
			], 22],
			[745, [
				[1125, 42, "Explore", { size: 11.5, color: "#3b7e5a", weight: 700 }],
				[1186, 1, <DividerStyle />],
				[1209, 35, "Define", { size: 11.5, color: "#555" }],
			], 18],
		]} />
		<PaneBodyStyle>
			<PaneMainStyle>
				<Stack from={1118} top={756} rows={[[761.5, [], 11]]} />
				<CardStyle $h={156}>
					<Stack from={1118} top={767} rows={[
						[786, [[1126, 53, "Software", { size: 12.5, color: "#606060" }]]],
						[804, [[1126, 157, "Computer software, or simply", body]]],
						[820, [[1126, 132, "software, is that part of a", body]]],
						[837, [[1126, 161, "computer system that consists", body]]],
						[853, [[1126, 140, "of encoded information or", body]]],
						[870, [[1126, 131, "computer instructions, in", body], [1287, 9, "...", body]]],
						[888, [
							[1126, 72, "en.wikipedia.org -", { size: 9.5, color: "#8a8a8a" }],
							[1208, 87, "Text under CC-BY-SA", { size: 9.5, color: "#8a8a8a" }],
						]],
						[905, [[1118, 28, "license", { size: 9.5, color: "#8a8a8a" }]]],
					]} />
				</CardStyle>
				<Stack from={1118} top={923} rows={[
					[938, [[1280, 28, "More", { size: 11.5, color: "#808080" }]]],
					[966, [[1126, 110, "Explore Wikipedia", { size: 12.5, color: "#606060" }]], 28],
				]} />
				<CardStyle $h={77}>
					<Stack from={1118} top={980} rows={[
						[997, [[1126, 175, "Software - Wikipedia, the fre", { size: 12.5, color: "#65907a" }]]],
						[1013, [[1126, 157, "Computer software, or simply", body]]],
						[1028, [[1126, 132, "software, is that part of a", body]]],
						[1043, [[1126, 157, "computer system that consist:", body], [1287, 9, "...", body]]],
					]} />
				</CardStyle>
			</PaneMainStyle>
			<PaneScrollStyle>
				<Stack from={1318} top={756} rows={[[760.5, [[1321, 7, <FlipStyle><Icon name="arrow" w={7} h={5} color="#666" /></FlipStyle>]], 9]]} />
				<ThumbStyle><GripStyle /></ThumbStyle>
			</PaneScrollStyle>
		</PaneBodyStyle>
	</PaneStyle>
);

const RaisedStyle = styled.span`
	margin-bottom: 6px;
`;

/* ---------- things floating over the sheet ---------- */

const FloatStyle = styled.div`
	position: absolute;
	left: ${({ $x }) => $x - 446}px;
	top: ${({ $y }) => $y - 560}px;
`;

const MiniToolbarStyle = styled.div`
	width: 115px;
	height: 43px;
	border: 1px solid #d6d6d6;
	background: #fcfcfc;
	box-shadow: 0 1px 2px rgba(0, 0, 0, 0.15);
`;

const MenuStyle = styled.div`
	width: 188px;
	height: 148px;
	border: 1px solid #5b5b5b;
	background: #fdfdfd;
`;

const MenuHeadingStyle = styled.div`
	display: flex;
	width: 164px;
	height: 18px;
	padding-left: 8px;
	align-items: center;
	background: #e9e9e9;
`;

const MenuHighlightStyle = styled.div`
	display: flex;
	width: 190px;
	height: 24px;
	align-items: center;
	border: 3px solid ${RED};
	background: linear-gradient(90deg, #cfcfcf, #b9b9b9);
`;

const BadgeStyle = styled.div`
	display: flex;
	width: 31px;
	height: 27px;
	align-items: center;
	justify-content: center;
	border: 3px solid ${RED};
	border-radius: 50%;
	background: #fbf6f5;
	font-size: 14px;
	font-weight: 700;
	line-height: 1;
	color: #a02a35;
`;

const menu = { size: 11, color: "#858585" };

const MiniToolbar = () => (
	<MiniToolbarStyle>
		<Stack from={557} top={730} rows={[
			[740, [
				[559, 67, <Combo h={17} text="Arial" w={23} color="#777" />],
				[626, 43, <Combo h={17} text="12" w={13} color="#777" />],
			], 17],
			[760, [
				[565, 7, "B", letter("#666")],
				[586, 6, "I", letter("#666", { italic: true, font: "Liberation Serif", size: 13 })],
				[601, 15, <RedLetter w={15} />], dd(623, "#666"),
				[635, 7, "A", letter("#777", { weight: 400 })], [642, 3, "ˆ", on],
				[655, 6, "A", letter("#777", { weight: 400, size: 10 })], [661, 3, "ˇ", on],
			], 14],
		]} />
	</MiniToolbarStyle>
);

const ContextMenu = () => (
	<MenuStyle>
		<Stack from={558} top={783} rows={[
			[795, [ic(562, 12, "cut", 11), [585, 17, <Fit w={17} {...menu}>Cu<u>t</u></Fit>]]],
			[814, [ic(561, 14, "copy", 12, { color: "#7d93a8" }), [585, 26, <Fit w={26} {...menu}><u>C</u>opy</Fit>]]],
			[833, [
				ic(561, 15, "paste", 14),
				[579, 164, (
					<MenuHeadingStyle>
						<Fit w={77} size={11} weight={700} color="#808080">Paste Options:</Fit>
					</MenuHeadingStyle>
				)],
			], 18],
			[854, [ic(586, 17, "paste", 15)], 16],
			[876.5, [[555, 190, (
				<MenuHighlightStyle>
					<Strip from={558} items={[
						ic(561, 15, "smart", 13),
						[585, 70, <Fit w={70} size={11} color="#606060">Smart <u>L</u>ookup</Fit>],
					]} />
				</MenuHighlightStyle>
			)]], 24],
			[898, [
				ic(562, 13, "list", 12, { color: "#888" }),
				[585, 70, <Fit w={70} {...menu}><u>F</u>ormat Cells...</Fit>],
			]],
			[918, [[585, 137, <Fit w={137} {...menu}>Pic<u>k</u> From Drop-down List...</Fit>]]],
		]} />
	</MenuStyle>
);

/* ---------- page ---------- */

const LINES = [
	"This is a text field where you can enter words and phrases about what you want to do",
	"next and quickly get to features you want to use or actions you want to perform. You",
	"can also use Tell Me to find help about what you're looking for, or to use Smart Lookup",
	"to research or define the term you entered.",
];

const RibbonFigure = () => (
	<FigureStyle $w={900} $left={9}>
		<FrameStyle $h={95}>
			<Tabs tabs={RIBBON_TABS} size={10} drop={1}>
				<TellMeStyle $boxed $w={170} $gap={0}>
					<Icon name="bulb" w={10} h={11} color="#dcebe2" />
					<Fit w={122} size={10} color="#c4ddcf">Tell me what you want to do...</Fit>
				</TellMeStyle>
			</Tabs>
			<Ribbon top={389} h={69} groups={RIBBON_GROUPS} />
		</FrameStyle>
		<CaptionStyle $h={28} $left={349}>
			<Fit w={196} size={15} weight={700} color="#111">Figure 13 - Tell Me Dialog Box</Fit>
		</CaptionStyle>
	</FigureStyle>
);

const SheetFigure = () => (
	<FigureStyle $w={902} $left={7}>
		<FrameStyle $h={507}>
			<Tabs tabs={SHEET_TABS} size={10.5}>
				<TellMeStyle $w={70} $gap={8}>
					<Icon name="bulb" w={12} h={12} color="#dcebe2" />
					<Fit w={37} size={10.5} color="#dcebe2">Tell me</Fit>
				</TellMeStyle>
			</Tabs>
			<Ribbon top={582} h={73} groups={SHEET_GROUPS} />
			<FormulaBar />
			<WorkAreaStyle>
				<Grid />
				<ScrollbarStyle>
					<ScrollTopStyle>
						<FlipStyle><Icon name="arrow" w={6} h={5} color="#666" /></FlipStyle>
					</ScrollTopStyle>
				</ScrollbarStyle>
				<Insights />
			</WorkAreaStyle>
			<FloatStyle $x={556} $y={729}><MiniToolbar /></FloatStyle>
			<FloatStyle $x={557} $y={782}><ContextMenu /></FloatStyle>
			<FloatStyle $x={543} $y={770}><BadgeStyle>2</BadgeStyle></FloatStyle>
			<FloatStyle $x={741} $y={863}><BadgeStyle>3</BadgeStyle></FloatStyle>
			<FloatStyle $x={1244} $y={685}><BadgeStyle>4</BadgeStyle></FloatStyle>
		</FrameStyle>
		<CaptionStyle $h={31} $left={354}>
			<Fit w={192} size={15} weight={700} color="#111">Figure 20 - Smart Lookup</Fit>
		</CaptionStyle>
	</FigureStyle>
);

const App = () => (
	<SlideStyle>
		<GlobalStyle />
		<SheetStyle>
			<RailStyle>
				<RailPanelStyle $color="#e3e0df" $margin="4px 0 0 23px" />
				<RailPanelStyle $color="#e4dfdf" $margin="0 47px 19px 2px" />
				<RailMarkStyle viewBox="0 0 20 44">
					<path d="M6 39Q4 26 6 13 8 3 12.500 2.500 16 3 17 10" fill="none" stroke="#cbc6c6" strokeWidth="1.500" />
					<path d="M12 13v5l2.500 3-2.500 4v6-6l-2.500-4 2.500-3" fill="none" stroke="#a5a0a0" strokeWidth="1" />
				</RailMarkStyle>
			</RailStyle>
			<ArticleStyle>
				<CopyStyle>
					<HeadingStyle>Tell Me</HeadingStyle>
					{LINES.map((text, idx) => (
						<LineStyle key={text} $last={idx === LINES.length - 1}>{text}</LineStyle>
					))}
				</CopyStyle>
				<RibbonFigure />
				<SheetFigure />
			</ArticleStyle>
		</SheetStyle>
	</SlideStyle>
);

export default App;
